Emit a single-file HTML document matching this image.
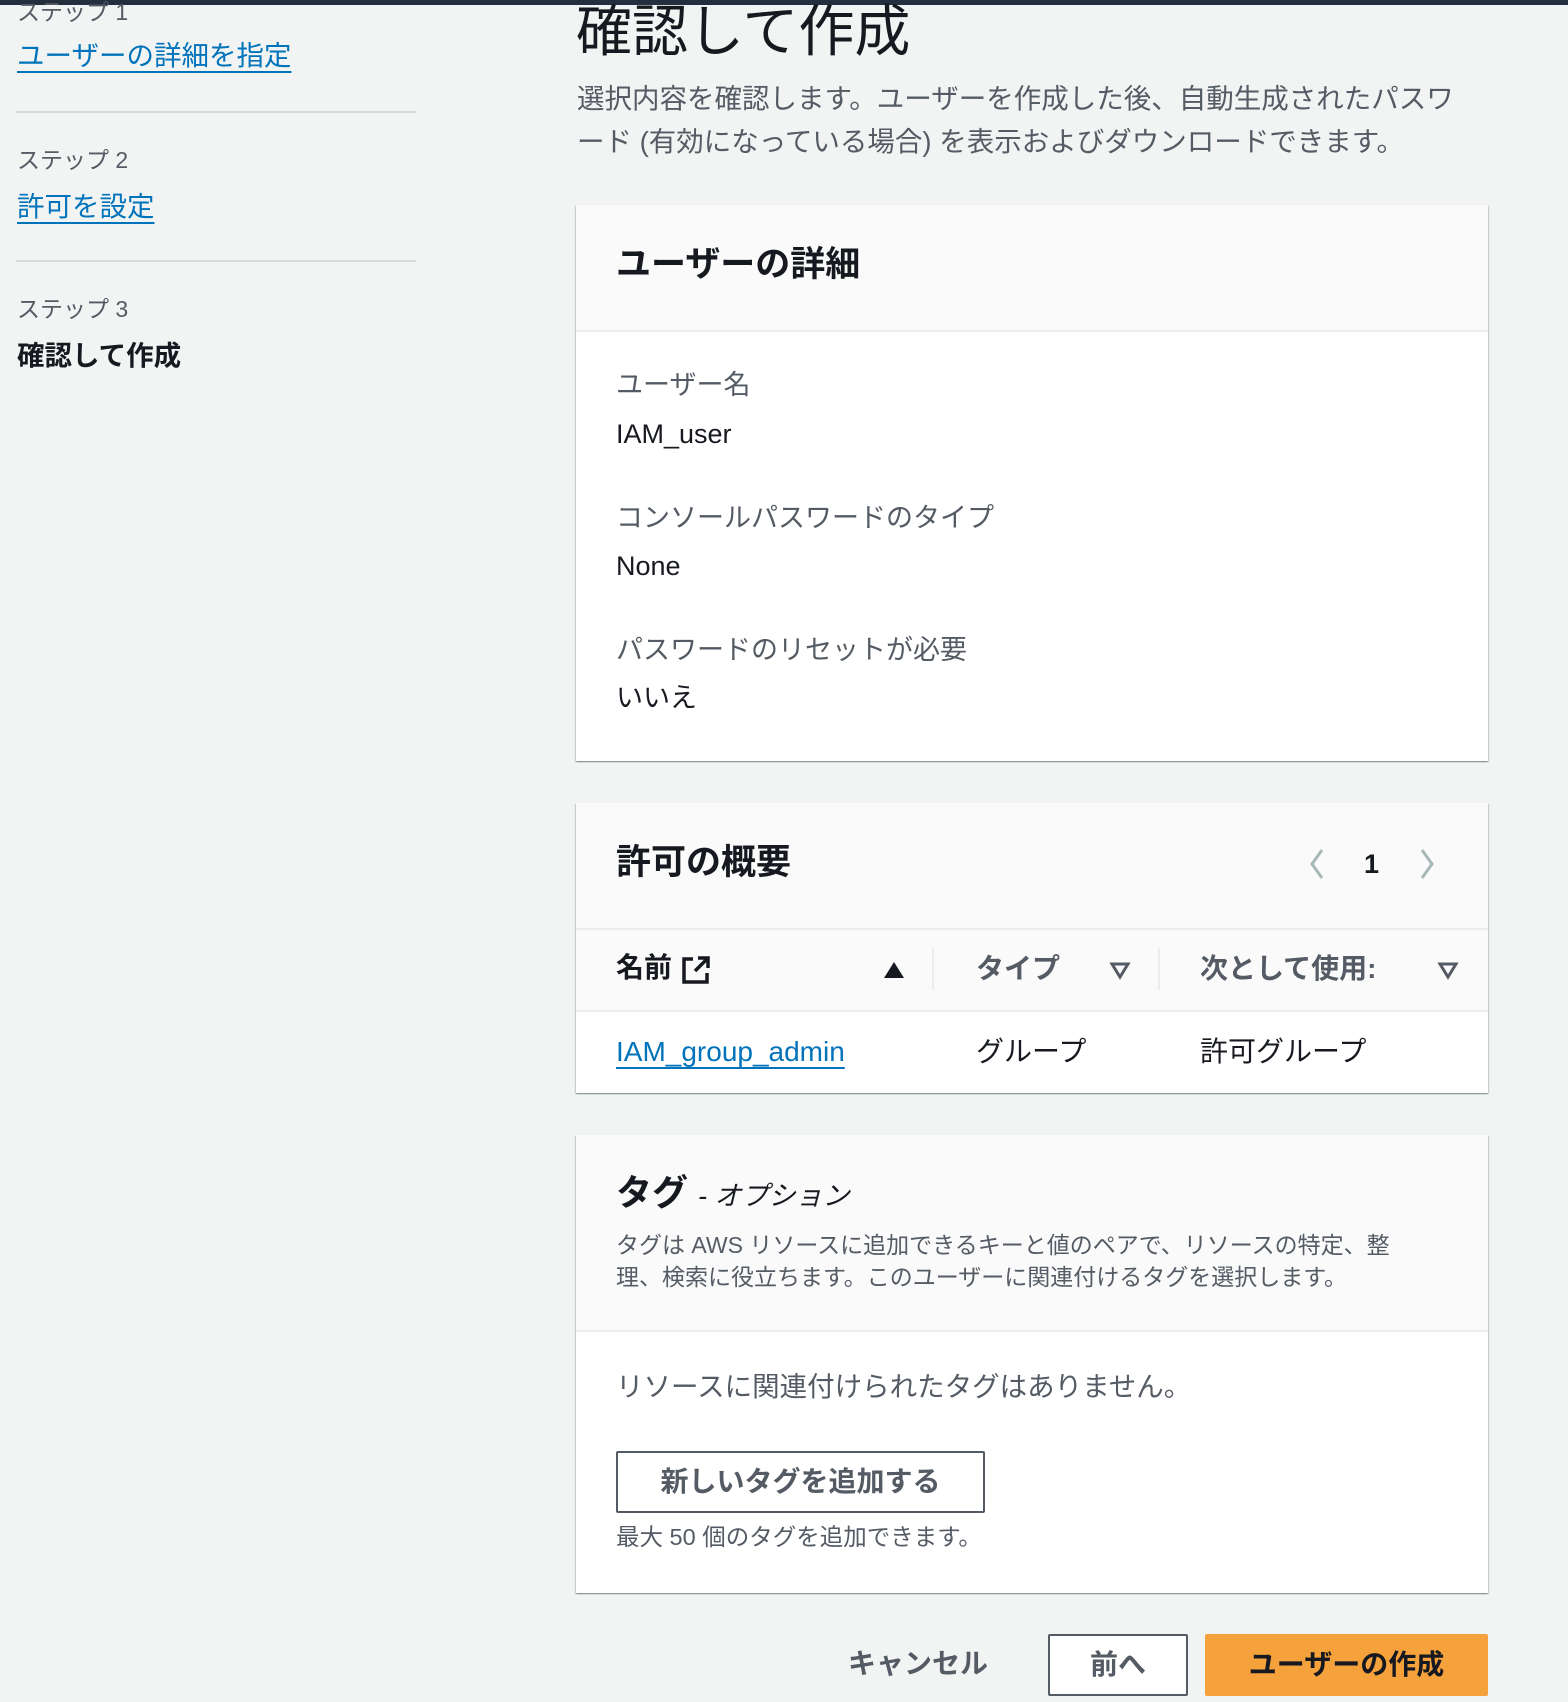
<!DOCTYPE html>
<html><head><meta charset="utf-8"><style>
*{margin:0;padding:0;box-sizing:border-box}
body{width:1568px;height:1702px;background:#f2f3f3;font-family:"Liberation Sans","Noto Sans CJK JP",sans-serif;color:#16191f;position:relative;overflow:hidden}
.a{position:absolute;white-space:nowrap;line-height:1}
.gray{color:#545b64}
.link{color:#0073bb;text-decoration:underline;text-underline-offset:6px;text-decoration-thickness:2px}
.hr{position:absolute;left:16px;width:400px;height:2px;background:#d5dbdb}
.card{position:absolute;left:576px;width:912px;background:#fff;box-shadow:0 1px 1px 0 rgba(0,28,36,.3),1px 1px 1px 0 rgba(0,28,36,.15),-1px 1px 1px 0 rgba(0,28,36,.15)}
.hd{position:absolute;left:0;right:0;top:0;background:#fafafa;border-bottom:2px solid #eaeded}
</style></head><body>
<div class="a" style="left:0;top:0;width:1568px;height:5px;background:#232f3e"></div>

<div class="a gray" style="left:17px;top:1px;font-size:23px">ステップ 1</div>
<div class="a link" style="left:17px;top:42px;font-size:27.5px">ユーザーの詳細を指定</div>
<div class="hr" style="top:111px"></div>
<div class="a gray" style="left:17px;top:149px;font-size:23px">ステップ 2</div>
<div class="a link" style="left:17px;top:193px;font-size:27.5px">許可を設定</div>
<div class="hr" style="top:260px"></div>
<div class="a gray" style="left:17px;top:298px;font-size:23px">ステップ 3</div>
<div class="a" style="left:17px;top:342px;font-size:27.5px;font-weight:700">確認して作成</div>

<div class="a" style="left:576px;top:4px;font-size:56px;color:#16191f">確認して作成</div>
<div class="a gray" style="left:577px;top:77px;font-size:27.5px;line-height:43px">選択内容を確認します。ユーザーを作成した後、自動生成されたパスワ<br>ード (有効になっている場合) を表示およびダウンロードできます。</div>

<div class="card" style="top:205px;height:556px">
 <div class="hd" style="height:127px"><div class="a" style="left:40px;top:42px;font-size:35px;font-weight:700">ユーザーの詳細</div></div>
 <div class="a gray" style="left:40px;top:167px;font-size:27px">ユーザー名</div>
 <div class="a" style="left:40px;top:216px;font-size:27px">IAM_user</div>
 <div class="a gray" style="left:40px;top:300px;font-size:27px">コンソールパスワードのタイプ</div>
 <div class="a" style="left:40px;top:348px;font-size:27px">None</div>
 <div class="a gray" style="left:40px;top:432px;font-size:27px">パスワードのリセットが必要</div>
 <div class="a" style="left:40px;top:480px;font-size:27px">いいえ</div>
</div>

<div class="card" style="top:803px;height:290px">
 <div class="hd" style="height:127px"><div class="a" style="left:40px;top:42px;font-size:35px;font-weight:700">許可の概要</div>
  <svg class="a" style="left:728px;top:44px" width="24" height="34"><path d="M18 3 8 17 18 31" fill="none" stroke="#aab7b8" stroke-width="3"/></svg>
  <div class="a" style="left:788px;top:48px;font-size:27px;font-weight:700">1</div>
  <svg class="a" style="left:840px;top:44px" width="24" height="34"><path d="M6 3 16 17 6 31" fill="none" stroke="#aab7b8" stroke-width="3"/></svg>
 </div>
 <div class="a" style="left:0;right:0;top:127px;height:82px;background:#fafafa;border-bottom:2px solid #eaeded"></div>
 <div class="a" style="left:40px;top:151px;font-size:28px;font-weight:700;color:#16191f">名前</div>
 <svg class="a" style="left:105px;top:152px" width="30" height="30"><path d="M12 4H3v23h23v-9" fill="none" stroke="#16191f" stroke-width="3.5"/><path d="M17 3h10v10M27 3 14 16" fill="none" stroke="#16191f" stroke-width="3.5"/></svg>
 <svg class="a" style="left:307px;top:157px" width="22" height="20"><path d="M11 2 21 18H1z" fill="#16191f"/></svg>
 <div class="a" style="left:356px;top:145px;width:2px;height:42px;background:#eaeded"></div>
 <div class="a" style="left:400px;top:152px;font-size:28px;font-weight:700;color:#545b64">タイプ</div>
 <svg class="a" style="left:533px;top:157px" width="22" height="20"><path d="M3 4H19L11 17z" fill="none" stroke="#545b64" stroke-width="3"/></svg>
 <div class="a" style="left:582px;top:145px;width:2px;height:42px;background:#eaeded"></div>
 <div class="a" style="left:624px;top:152px;font-size:28px;font-weight:700;color:#545b64">次として使用:</div>
 <svg class="a" style="left:861px;top:157px" width="22" height="20"><path d="M3 4H19L11 17z" fill="none" stroke="#545b64" stroke-width="3"/></svg>
 <div class="a link" style="left:40px;top:235px;font-size:28px">IAM_group_admin</div>
 <div class="a" style="left:400px;top:235px;font-size:28px">グループ</div>
 <div class="a" style="left:624px;top:235px;font-size:28px">許可グループ</div>
</div>

<div class="card" style="top:1135px;height:458px">
 <div class="hd" style="height:197px">
  <div class="a" style="left:40px;top:40px;font-size:36px;font-weight:700">タグ <span style="font-size:27px;font-weight:400;font-style:italic">- オプション</span></div>
  <div class="a gray" style="left:40px;top:94px;font-size:23px;line-height:32px">タグは AWS リソースに追加できるキーと値のペアで、リソースの特定、整<br>理、検索に役立ちます。このユーザーに関連付けるタグを選択します。</div>
 </div>
 <div class="a gray" style="left:40px;top:238px;font-size:27.5px">リソースに関連付けられたタグはありません。</div>
 <div class="a" style="left:40px;top:316px;width:369px;height:62px;border:2px solid #545b64;border-radius:2px;font-size:28px;font-weight:700;color:#545b64;text-align:center;line-height:58px">新しいタグを追加する</div>
 <div class="a gray" style="left:40px;top:391px;font-size:23.5px">最大 50 個のタグを追加できます。</div>
</div>

<div class="a" style="left:918px;top:1650px;font-size:28px;font-weight:700;color:#545b64;transform:translateX(-50%)">キャンセル</div>
<div class="a" style="left:1048px;top:1634px;width:140px;height:62px;border:2px solid #545b64;border-radius:2px;background:#fff;font-size:28px;font-weight:700;color:#545b64;text-align:center;line-height:58px">前へ</div>
<div class="a" style="left:1205px;top:1634px;width:283px;height:62px;border-radius:2px;background:#f5a13c;font-size:28px;font-weight:700;color:#16191f;text-align:center;line-height:62px">ユーザーの作成</div>
</body></html>
